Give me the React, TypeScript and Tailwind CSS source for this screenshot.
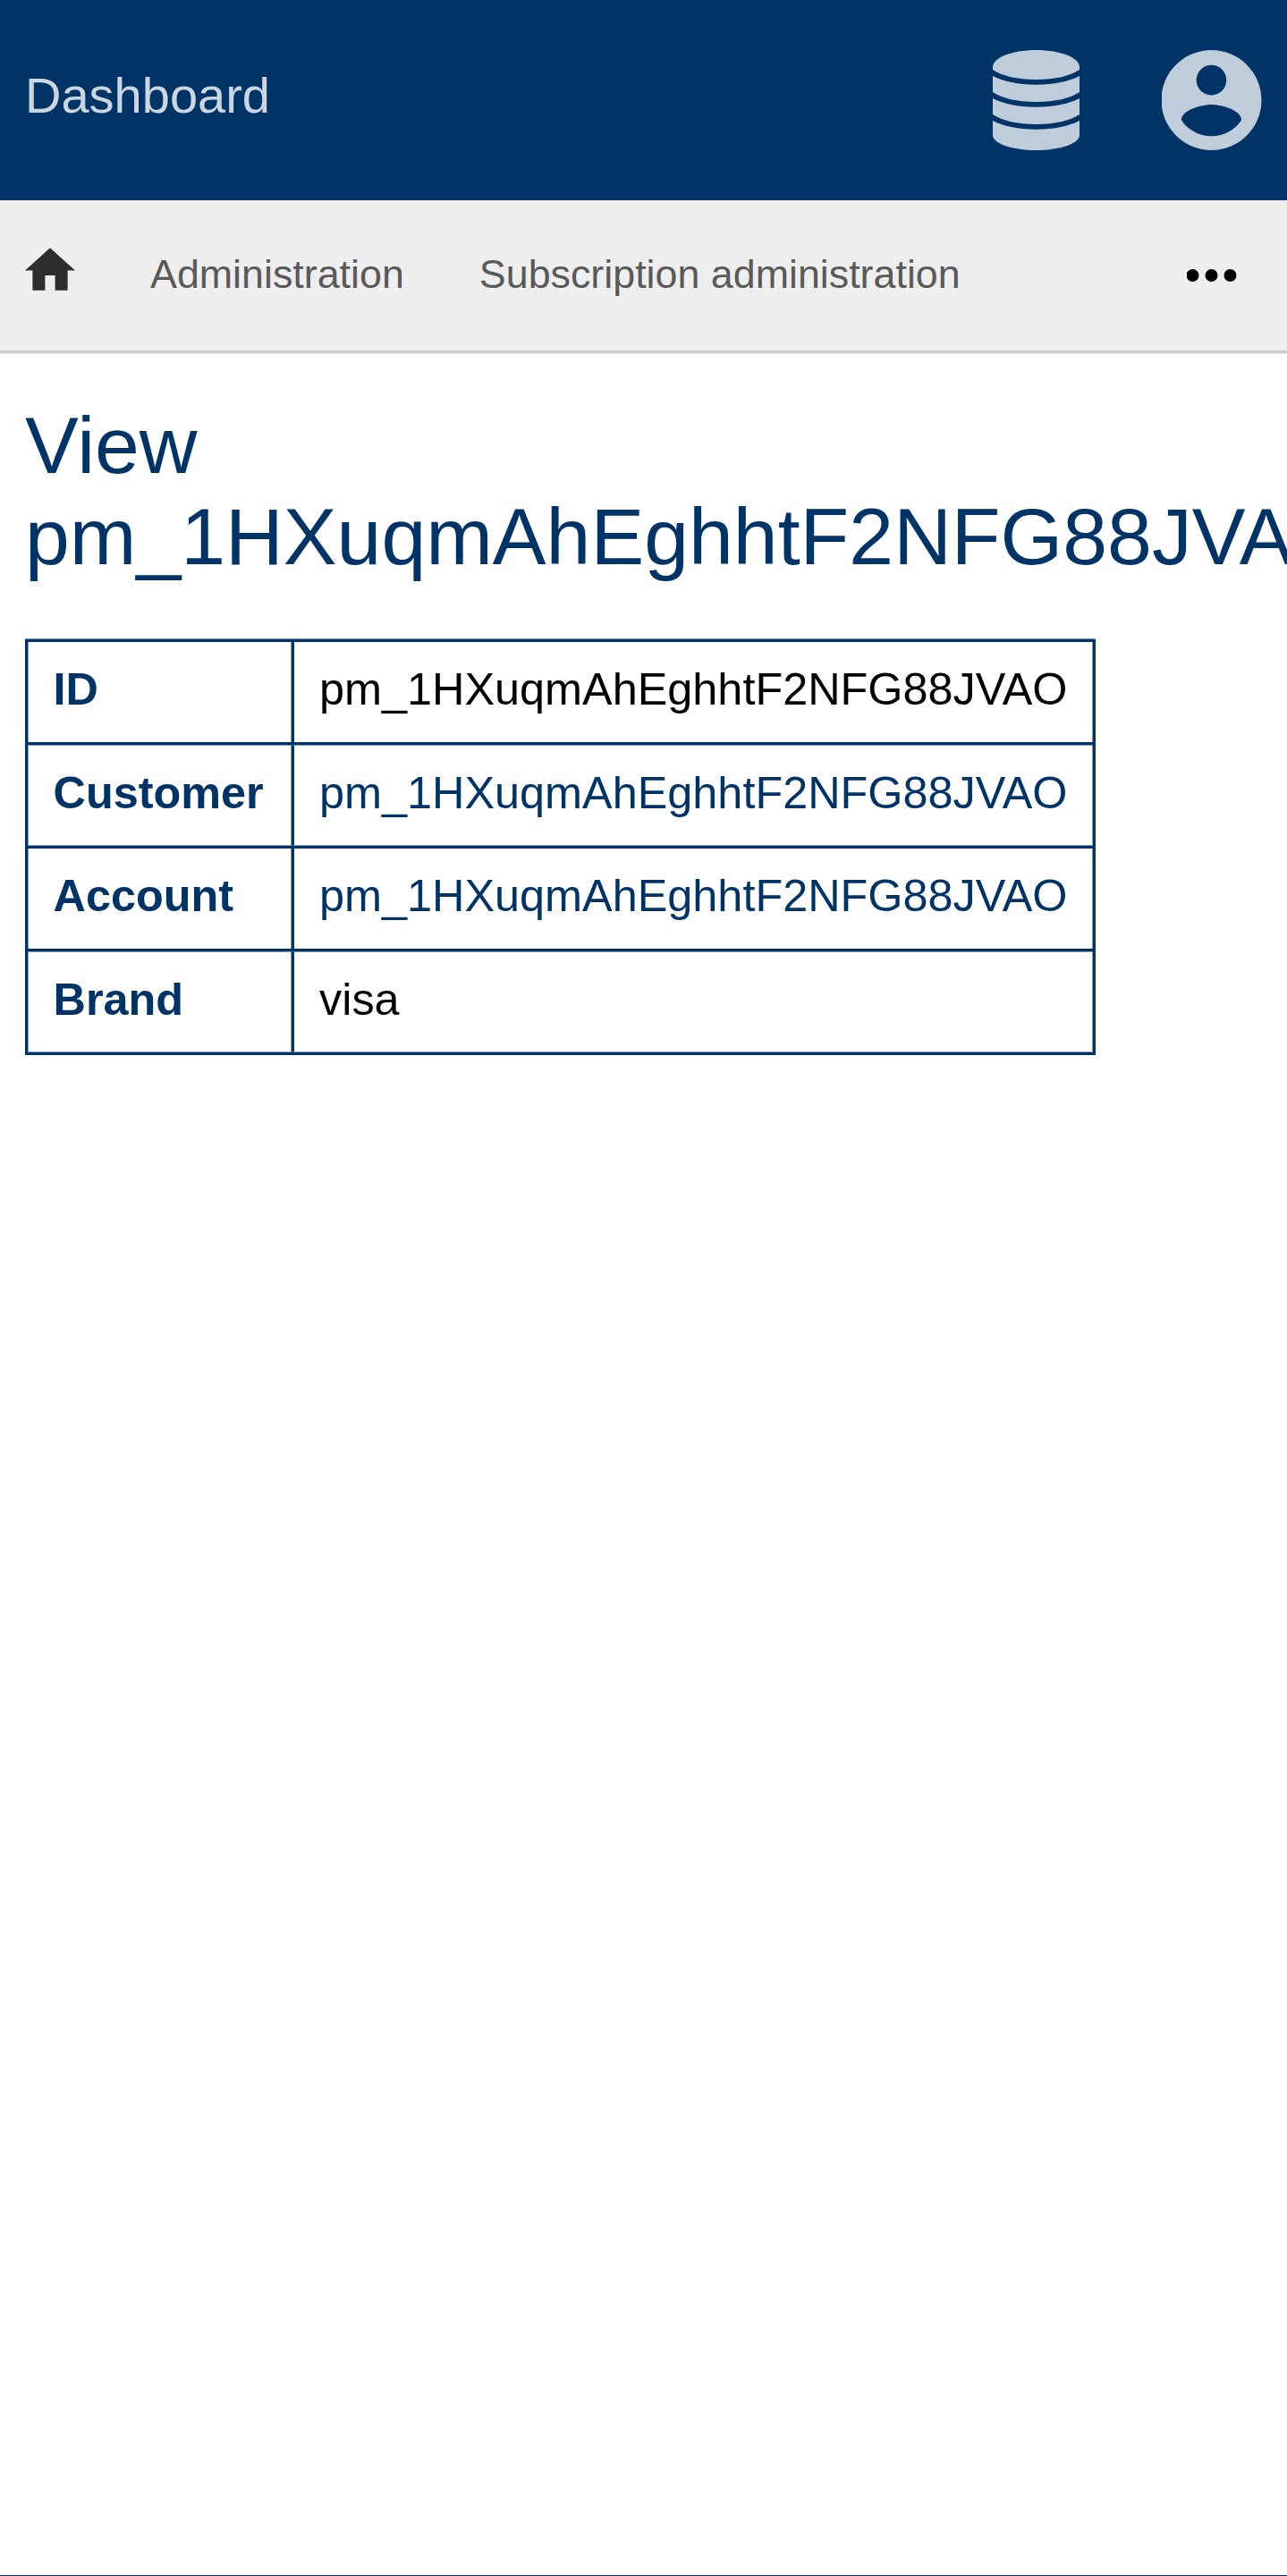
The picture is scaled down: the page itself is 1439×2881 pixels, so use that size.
import type { ReactNode } from "react";

const PAYMENT_METHOD = "pm_1HXuqmAhEghhtF2NFG88JVAO";

type Row = { label: string; value: string; link?: boolean; cell: string };

const rows: Row[] = [
  { label: "ID", value: PAYMENT_METHOD, cell: "h-[112px]" },
  { label: "Customer", value: PAYMENT_METHOD, link: true, cell: "h-[113px] border-y border-y-[#8099b3]" },
  { label: "Account", value: PAYMENT_METHOD, link: true, cell: "h-[112px]" },
  { label: "Brand", value: "visa", cell: "h-[113px] border-y border-y-[#8099b3]" },
];

function DatabaseIcon() {
  return (
    <svg className="h-[112px] w-[97px]" viewBox="0 0 97 112" fill="currentColor">
      <path d="M0 19C0 9 20 0 48.5 0S97 9 97 19V22C86 29 70 33 48.5 33S11 29 0 22Z" />
      <path d="M0 29C12 35 28 38.7 48.5 38.7S85 35 97 29V47C86 54 70 58 48.5 58S11 54 0 47Z" />
      <path d="M0 54C12 60 28 63.7 48.5 63.7S85 60 97 54V72C86 79 70 83 48.5 83S11 79 0 72Z" />
      <path d="M0 79C12 85 28 88.7 48.5 88.7S85 85 97 79V95C97 104 77 112 48.5 112S0 104 0 95Z" />
    </svg>
  );
}

function AccountIcon() {
  return (
    <svg className="h-28 w-28" viewBox="2.09 2 20 20" fill="currentColor">
      <path d="M12 2C6.48 2 2 6.48 2 12s4.48 10 10 10 10-4.48 10-10S17.52 2 12 2zm0 3c1.66 0 3 1.34 3 3s-1.34 3-3 3-3-1.34-3-3 1.34-3 3-3zm0 14.2c-2.5 0-4.71-1.28-6-3.22.03-1.99 4-3.08 6-3.08 1.99 0 5.97 1.09 6 3.08-1.29 1.94-3.5 3.22-6 3.22z" />
    </svg>
  );
}

function HomeIcon() {
  return (
    <svg className="mt-[53px] h-12 w-14" viewBox="2 2.93 20 17.14" fill="currentColor">
      <path d="M10 20v-6h4v6h5v-8h3L12 3 2 12h3v8z" />
    </svg>
  );
}

function MoreIcon() {
  return (
    <svg className="mt-[77px] h-[14px] w-14" viewBox="0.5 0 56 14" fill="currentColor">
      <circle cx="7" cy="7" r="7" />
      <circle cx="28" cy="7" r="7" />
      <circle cx="49" cy="7" r="7" />
    </svg>
  );
}

function NavLink({ children }: { children: ReactNode }) {
  return <a className="mt-[57px] text-[44.8px] leading-[50px] text-[#595959]">{children}</a>;
}

export default function App() {
  return (
    <div className="flex h-[2881px] w-[1439px] flex-col overflow-hidden bg-[#003366] font-['Liberation_Sans',Arial,sans-serif]">
      <header className="flex h-56 shrink-0 items-start justify-between px-7">
        <a className="mt-[75px] text-[56px] leading-[63px] text-[#ccd6e0]">Dashboard</a>
        <div className="mt-14 flex gap-[92px] text-[#bfccd9]">
          <DatabaseIcon />
          <AccountIcon />
        </div>
      </header>
      <nav className="flex h-[172px] shrink-0 items-start border-b border-[#e5e5e5] bg-[#eeeeee] shadow-[inset_0_-3px_#cbcbcb]">
        <a className="mr-21 ml-7 text-[#2e2e2e]">
          <HomeIcon />
        </a>
        <div className="flex gap-21">
          <NavLink>Administration</NavLink>
          <NavLink>Subscription administration</NavLink>
        </div>
        <button className="mr-14 ml-auto text-black">
          <MoreIcon />
        </button>
      </nav>
      <main className="h-[2484px] shrink-0 bg-white px-7">
        <h1 className="pt-[51px] text-[89.6px] leading-[102px] font-normal text-[#003366]">View {PAYMENT_METHOD}</h1>
        <div className="mt-[63px] w-[1197px] border-t border-[#8099b3]">
          <div className="divide-y-3 divide-[#003366] border-3 border-[#003366] text-[50.4px] leading-[105px]">
            {rows.map((row) => (
              <div key={row.label} className="flex">
                <div className={`w-[295px] border-x border-x-[#8099b3] pl-[27.5px] font-bold text-[#003366] ${row.cell}`}>
                  {row.label}
                </div>
                <div
                  className={`flex-1 border-r border-l-3 border-r-[#8099b3] border-l-[#003366] pl-7 ${row.link ? "text-[#003366]" : "text-black"} ${row.cell}`}
                >
                  {row.value}
                </div>
              </div>
            ))}
          </div>
        </div>
      </main>
    </div>
  );
}
